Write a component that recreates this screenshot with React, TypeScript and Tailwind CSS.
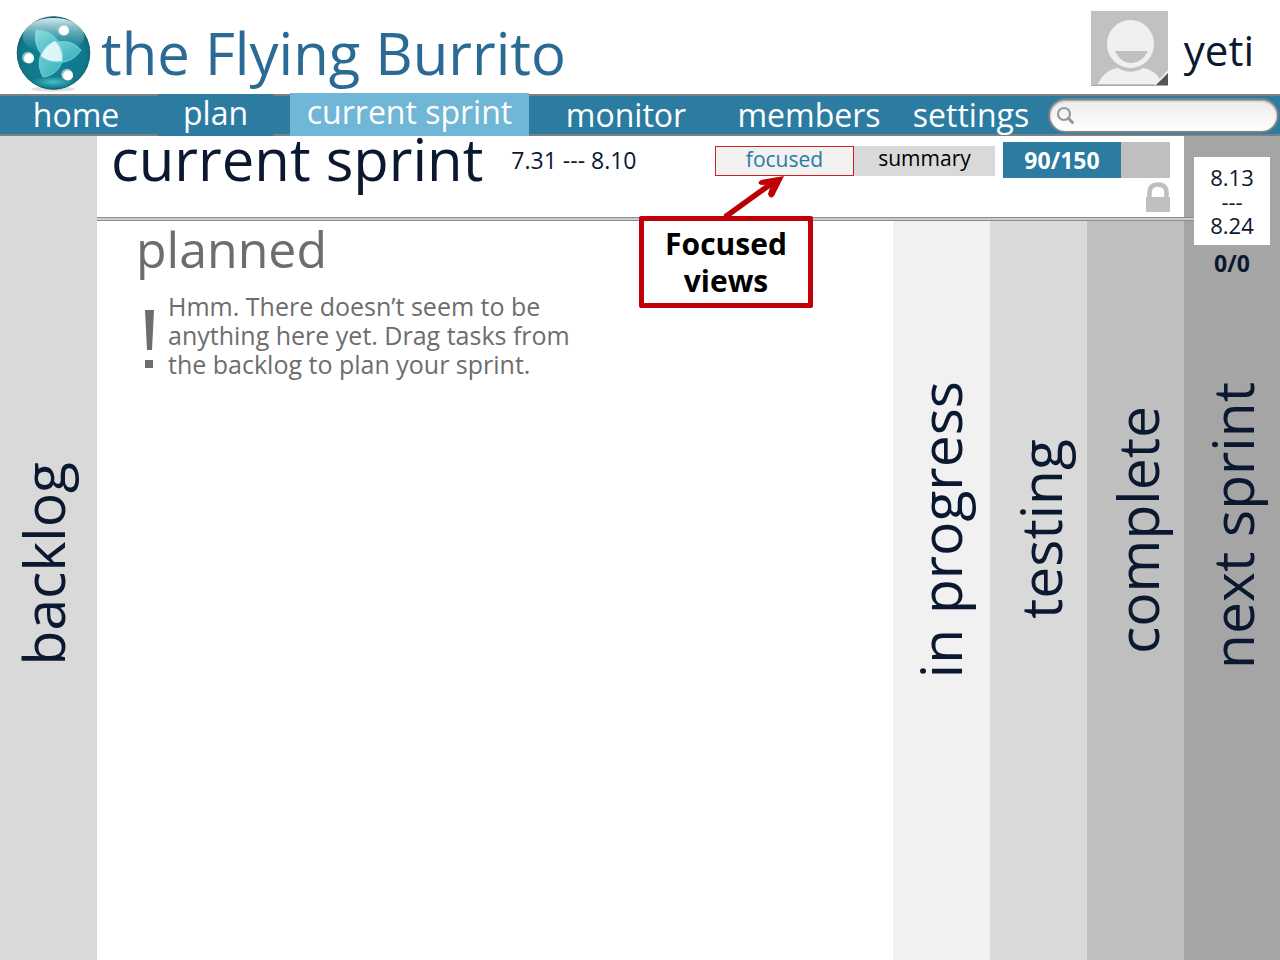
import { ReactNode } from "react";

function Logo() {
  return (
    <svg className="h-20 w-20" viewBox="0 0 80 80" aria-hidden="true">
      <defs>
        <radialGradient id="globe" cx="0.5" cy="0.55" r="0.6">
          <stop offset="0" stopColor="#0f8496" />
          <stop offset="0.7" stopColor="#10788b" />
          <stop offset="1" stopColor="#0b6478" />
        </radialGradient>
        <linearGradient id="shine" x1="0" y1="0" x2="0" y2="1">
          <stop offset="0" stopColor="#ffffff" stopOpacity="0.85" />
          <stop offset="1" stopColor="#2fa9b8" stopOpacity="0" />
        </linearGradient>
        <linearGradient id="leaf" x1="0" y1="0" x2="1" y2="1">
          <stop offset="0" stopColor="#9fe3e8" />
          <stop offset="1" stopColor="#36bec6" />
        </linearGradient>
        <radialGradient id="glow" cx="0.5" cy="0.5" r="0.5">
          <stop offset="0" stopColor="#5fdbe0" stopOpacity="0.7" />
          <stop offset="1" stopColor="#5fdbe0" stopOpacity="0" />
        </radialGradient>
      </defs>
      <ellipse cx="40" cy="76" rx="22" ry="2.500" fill="#000" opacity="0.12" />
      <circle cx="40.500" cy="40" r="36.300" fill="url(#globe)" stroke="#0d5f74" />
      <ellipse cx="40" cy="69" rx="22" ry="6" fill="url(#glow)" />
      <ellipse cx="40.500" cy="23" rx="31" ry="18" fill="url(#shine)" />
      <g fill="url(#leaf)" stroke="#7edbe0" strokeWidth="0.8" fillOpacity="0.8">
        <path d="M23 17 C41 17 52 32 49 48 C34 51 19 38 23 17Z" />
        <path d="M68 37 C58 53 38 52 28 43 C36 26 57 24 68 37Z" />
        <path d="M30 64 C22 50 27 34 42 28 C56 38 50 62 30 64Z" />
      </g>
      <path d="M42 28 Q50 36 49 48 Q36 50 28 43 Q32 33 42 28Z" fill="#f0fdfd" fillOpacity="0.85" />
      <circle cx="50" cy="16.500" r="5.800" fill="#9cc5ca" />
      <circle cx="51" cy="17.500" r="5" fill="#fff" />
      <circle cx="15" cy="44.500" r="5.800" fill="#9cc5ca" />
      <circle cx="16" cy="45.500" r="5" fill="#fff" />
      <circle cx="54" cy="61.500" r="5.800" fill="#9cc5ca" />
      <circle cx="55" cy="62.500" r="5" fill="#fff" />
    </svg>
  );
}

function Avatar() {
  return (
    <svg className="h-[75px] w-[77px]" viewBox="0 0 77 75" role="img" aria-label="yeti avatar">
      <rect width="77" height="75" fill="#c1c1c1" />
      <path d="M7 73 C11 64 18 58 27 57 C35 62 44 62 52 57 C62 58 69 66 71 73Z" fill="#f0f0f0" />
      <circle cx="40" cy="33" r="25.500" fill="#c1c1c1" />
      <ellipse cx="39.500" cy="33" rx="23.500" ry="24" fill="#f0f0f0" />
      <path d="M24 40 H57 C53 48 47 52 40 52 C33 52 28 48 24 40Z" fill="#c1c1c1" />
      <path d="M77 59 V75 H62Z" fill="#f0f0f0" />
      <path d="M77 62 V74 H65Z" fill="#555" />
      <path d="M0 74.500 H77" stroke="#aaa" />
    </svg>
  );
}

function Lock() {
  return (
    <svg className="h-[30px] w-6" viewBox="0 0 24 30" role="img" aria-label="locked">
      <path d="M3.500 16 V11 C3.500 5 7 2.500 12 2.500 C17 2.500 20.500 5 20.500 11 V16" fill="none" stroke="#bfbfbf" strokeWidth="4.500" />
      <rect y="15" width="24" height="15" fill="#bfbfbf" />
    </svg>
  );
}

function NavLink({ className, children }: { className: string; children: ReactNode }) {
  return (
    <a href="#" className={`shrink-0 whitespace-nowrap text-center ${className}`}>
      {children}
    </a>
  );
}

function Lane({ className, children }: { className: string; children: ReactNode }) {
  return (
    <section className={`flex w-[97px] shrink-0 items-center justify-center ${className}`}>
      <h2 className="rotate-180 whitespace-nowrap text-[57px] leading-[60px] [writing-mode:vertical-rl]">{children}</h2>
    </section>
  );
}

function Callout() {
  return (
    <div className="absolute -left-[76px] top-7 z-10 w-[174px]">
      <svg className="ml-[70px] block h-[42px] w-20" viewBox="0 0 80 42" aria-hidden="true">
        <path d="M16 43 L66 7" fill="none" stroke="#b90005" strokeWidth="5.500" />
        <path d="M75 2 L52 6 Q47 9 52 11 L62 10.500 L59 20 Q61 26 65 22 Z" fill="#c00006" />
      </svg>
      <p className="rounded-xs border-[5px] border-[#c00006] bg-white py-1 text-center text-[30px] leading-[37px] font-bold text-black">
        Focused
        <br />
        views
      </p>
    </div>
  );
}

export default function App() {
  return (
    <div className="flex min-h-screen flex-col bg-white font-['Open_Sans','Noto_Sans',sans-serif] text-[#0a1830]">
      <header className="flex h-[94px] items-center justify-between pr-6.5 pl-[13px]">
        <div className="flex items-center gap-2 pt-3">
          <Logo />
          <h1 className="text-[58px] leading-[64px] whitespace-nowrap text-[#2a6a94]">the Flying Burrito</h1>
        </div>
        <div className="flex items-center gap-4 pt-0.5">
          <Avatar />
          <span className="pt-1 text-[42px] leading-[48px]">yeti</span>
        </div>
      </header>

      <nav className="flex h-[42px] items-center border-y-2 border-[#7b8185] bg-[#2b7ca0] text-[32px] leading-[38px] text-white">
        <NavLink className="w-[152px]">home</NavLink>
        <NavLink className="-my-1 ml-1.5 h-[42px] w-[115px] bg-[#2b7ca0]">plan</NavLink>
        <NavLink className="mb-0.5 ml-[17px] h-[43px] w-[239px] bg-[#70b6d7]">current sprint</NavLink>
        <NavLink className="w-[194px]">monitor</NavLink>
        <NavLink className="w-[172px]">members</NavLink>
        <NavLink className="w-[152px]">settings</NavLink>
        <label className="mx-px flex h-[35px] min-w-0 flex-1 items-center gap-2 rounded-full border-2 border-[#7b8185] bg-linear-to-b from-[#ececec] to-white px-1.5 shadow-[inset_0_1px_2px_#999]">
          <svg className="h-5 w-5 shrink-0" viewBox="0 0 20 20" aria-hidden="true">
            <circle cx="8" cy="9" r="6" fill="none" stroke="#939a9d" strokeWidth="2.200" />
            <path d="M12.500 13.500 L16.500 17.500" stroke="#939a9d" strokeWidth="3" strokeLinecap="round" />
          </svg>
          <input type="search" aria-label="Search" className="w-full min-w-0 bg-transparent text-lg text-[#0a1830] outline-none" />
        </label>
      </nav>

      <main className="flex flex-1">
        <Lane className="bg-[#d9d9d9] pt-8 pr-3">backlog</Lane>

        <div className="flex min-w-0 flex-1 flex-col">
          <div className="flex h-[81px] shrink-0 items-start justify-between px-3.5">
            <div className="flex items-start gap-7">
              <h2 className="text-[58px] leading-[46px] whitespace-nowrap">current sprint</h2>
              <p className="pt-2 text-[23px] leading-8 whitespace-nowrap">7.31 --- 8.10</p>
            </div>
            <div className="flex items-start gap-2 pt-1.5">
              <div className="flex pt-1 text-[21px] leading-6">
                <div className="relative">
                  <button type="button" className="block h-[30px] w-[139px] border border-[#d02020] bg-[#f1f1f1] pb-2 text-[#2b7ca0]">
                    focused
                  </button>
                  <Callout />
                </div>
                <button type="button" className="h-[30px] w-[141px] bg-[#d9d9d9] pb-1.5 text-black">
                  summary
                </button>
              </div>
              <div className="flex w-[167px] flex-col items-end gap-1">
                <div className="h-9 w-full bg-[#bfbfbf]">
                  <div className="h-full w-[118px] bg-[#2b7ca0] text-center text-[23px] leading-9 font-bold text-white">90/150</div>
                </div>
                <Lock />
              </div>
            </div>
          </div>
          <div className="relative -mr-3 h-1 shrink-0 border-y border-[#8c8c8c] bg-[#cccccc]" />

          <div className="flex flex-1">
            <section className="min-w-0 flex-1 pl-[39px] text-[#6d6d6d]">
              <h2 className="text-[50px] leading-[56px]">planned</h2>
              <div className="flex gap-3 pt-[15px]">
                <svg className="mt-4 ml-2 h-[60px] w-3 shrink-0" viewBox="0 0 12 60" aria-hidden="true">
                  <path d="M1 2 H10 L8 42 H3Z M1 52 H9 V60 H1Z" fill="#6d6d6d" />
                </svg>
                <p className="w-[430px] text-[25px] leading-[29px]">
                  Hmm. There doesn’t seem to be anything here yet. Drag tasks from the backlog to plan your sprint.
                </p>
              </div>
            </section>
            <Lane className="bg-[#f1f1f1] pr-1 pb-[122px]">in progress</Lane>
            <Lane className="bg-[#d9d9d9] pb-[122px] pl-0.5">testing</Lane>
            <Lane className="bg-[#bfbfbf] pb-[122px] pl-0.5">complete</Lane>
          </div>
        </div>

        <aside className="flex w-24 shrink-0 flex-col items-center bg-[#a5a5a5] pt-[21px]">
          <p className="relative w-[76px] bg-white py-2 text-center text-[22px] leading-6">
            8.13
            <br />
            ---
            <br />
            8.24
          </p>
          <p className="pt-1 text-[23px] leading-7 font-bold">0/0</p>
          <h2 className="mt-[105px] rotate-180 text-[57px] leading-[60px] whitespace-nowrap [writing-mode:vertical-rl]">next sprint</h2>
        </aside>
      </main>
    </div>
  );
}
